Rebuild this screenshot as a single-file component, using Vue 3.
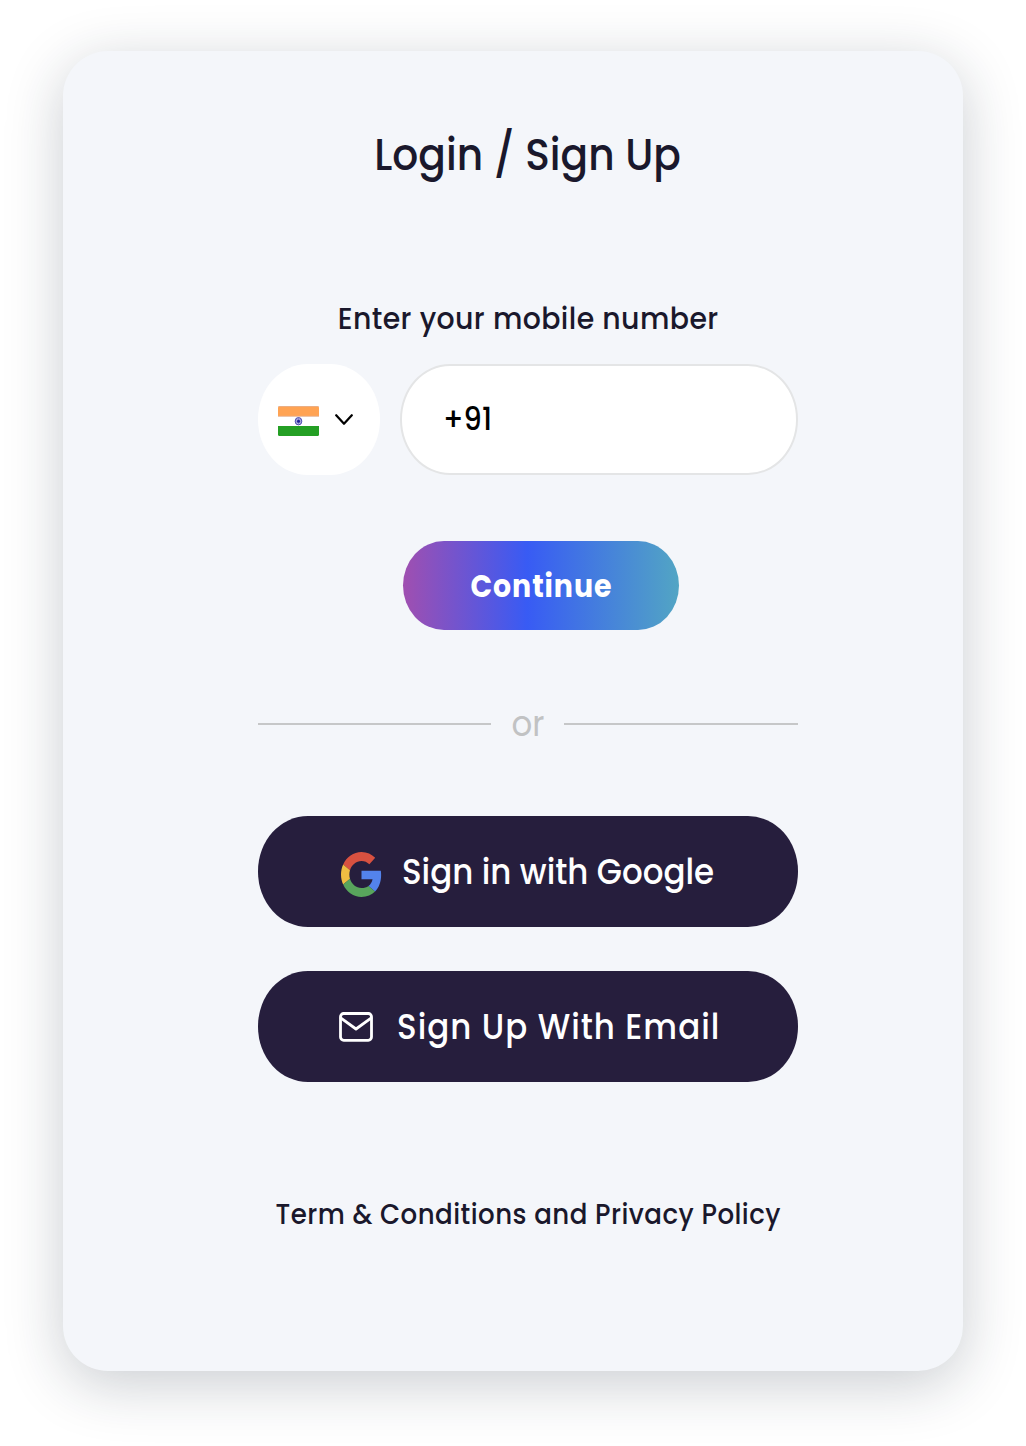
<script setup>
import { ref } from 'vue'

const phone = ref('+91')
</script>

<template>
  <main class="page">
    <section class="card">
      <h1 class="title"><span>Login / Sign Up</span></h1>

      <label class="label" for="phone"><span>Enter your mobile number</span></label>
      <div class="phone-row">
        <button class="country" type="button" aria-label="Country">
          <svg class="flag" viewBox="0 0 41 30">
            <rect width="41" height="30" rx="1.5" fill="#fff" />
            <path d="M1.5 0h38Q41 0 41 1.5V10.5H0V1.5Q0 0 1.5 0Z" fill="#ffa353" />
            <path d="M0 20h41v8.500q0 1.500-1.500 1.500h-38Q0 30 0 28.500Z" fill="#249f24" />
            <path d="M0 .4h41M0 10.300h41" stroke="#d8b7ad" stroke-width=".6" />
            <ellipse cx="20.500" cy="15.200" rx="3.300" ry="3.700" fill="#b9b9e6" stroke="#4b4baf" stroke-width="1" />
            <path d="M20.500 12v6.400M17.600 15.200h5.800M18.400 12.900l4.200 4.600M22.600 12.900l-4.200 4.600" stroke="#5555b5" stroke-width=".5" />
            <circle cx="20.500" cy="15.200" r="1.500" fill="#20209a" />
          </svg>
          <svg class="chevron" viewBox="0 0 18 12">
            <path d="M1.200 1.200 9 9.800 16.800 1.200" fill="none" stroke="#000" stroke-width="2.200" stroke-linecap="round" stroke-linejoin="round" />
          </svg>
        </button>
        <div class="field"><span id="phone">{{ phone }}</span></div>
      </div>

      <button class="continue" type="button"><span>Continue</span></button>

      <div class="divider"><i></i><span>or</span><i></i></div>

      <button class="signin google" type="button">
        <svg class="g-logo" viewBox="0 0 48 48" preserveAspectRatio="none">
          <path fill="#d85140" d="M24 9.500c3.540 0 6.710 1.220 9.210 3.600l6.850-6.850C35.900 2.380 30.470 0 24 0 14.620 0 6.510 5.380 2.560 13.220l7.980 6.190C12.430 13.720 17.740 9.500 24 9.500z" />
          <path fill="#5383ec" d="M46.980 24.550c0-1.570-.15-3.090-.38-4.550H24v9.020h12.940c-.58 2.960-2.260 5.480-4.780 7.180l7.730 6c4.510-4.180 7.090-10.360 7.090-17.650z" />
          <path fill="#f0bd42" d="M10.530 28.590c-.48-1.450-.76-2.990-.76-4.590s.27-3.140.76-4.590l-7.980-6.190C.92 16.460 0 20.120 0 24c0 3.880.92 7.540 2.560 10.780l7.970-6.190z" />
          <path fill="#58a55c" d="M24 48c6.480 0 11.930-2.130 15.890-5.810l-7.730-6c-2.150 1.450-4.920 2.300-8.160 2.300-6.260 0-11.570-4.220-13.470-9.910l-7.980 6.190C6.510 42.620 14.620 48 24 48z" />
        </svg>
        <span>Sign in with Google</span>
      </button>

      <button class="signin email" type="button">
        <svg class="mail" viewBox="0 0 34 30">
          <g fill="none" stroke="#fff" stroke-width="2.800" stroke-linecap="round" stroke-linejoin="round">
            <rect x="1.500" y="1.500" width="31" height="26.800" rx="3.200" />
            <path d="M2 6.200 17 17 32 6.200" />
          </g>
        </svg>
        <span>Sign Up With Email</span>
      </button>

      <p class="terms"><span>Term &amp; Conditions and Privacy Policy</span></p>
    </section>
  </main>
</template>

<style>
body {
  background: #fff;
}
</style>

<style scoped>
.page {
  box-sizing: border-box;
  width: 1026px;
  height: 1446px;
  padding: 51px 63px 75px;
  overflow: hidden;
  font-family: Poppins, Inter, "Noto Sans", sans-serif;
  font-weight: 500;
  color: #1a182c;
}
.card {
  box-sizing: border-box;
  width: 900px;
  height: 1320px;
  padding: 74px 165.500px 0 195px;
  border-radius: 45px;
  background: #f4f6fa;
  box-shadow: 0 13px 58px rgba(28, 40, 58, 0.23);
  display: flex;
  flex-direction: column;
  align-items: center;
}
button {
  border: 0;
  padding: 0;
  font: inherit;
}
/* Lettering is slightly condensed throughout the card */
span {
  display: inline-block;
  white-space: nowrap;
  transform: scaleX(0.915);
}
.title {
  margin: 0;
  height: 60px;
  line-height: 60px;
  font-size: 44.5px;
  font-weight: 500;
}
.label {
  margin-top: 112px;
  height: 42px;
  line-height: 42px;
  font-size: 31px;
  letter-spacing: 0.43px;
}
.phone-row {
  margin-top: 25px;
  width: 539.5px;
  height: 111px;
  display: flex;
  gap: 20px;
}
.country {
  box-sizing: border-box;
  width: 122px;
  height: 111px;
  padding: 3px 0 0 20px;
  border-radius: 50px / 55px;
  background: #fff;
  display: flex;
  align-items: center;
  gap: 16px;
}
.flag {
  width: 41px;
  height: 30px;
}
.chevron {
  width: 18px;
  height: 12px;
  margin-top: -2px;
}
.field {
  box-sizing: border-box;
  flex: 1;
  height: 111px;
  border: 2px solid #e4e5e6;
  border-radius: 50px / 55px;
  background: #fff;
  padding-left: 41px;
  line-height: 107px;
  font-size: 31.5px;
  color: #000;
}
.field span,
.signin span {
  transform-origin: left center;
}
.continue {
  margin: 66px 0 0 27px;
  width: 276px;
  height: 89px;
  border-radius: 41px / 44.5px;
  background: linear-gradient(90deg, #a04fb0 0%, #385bf4 45%, #52a5c4 100%);
  color: #fff;
  font-size: 31px;
  font-weight: 700;
  letter-spacing: 1px;
  line-height: 91px;
}
.continue span {
  margin-left: 1px;
}
.divider {
  margin-top: 66px;
  width: 539.5px;
  height: 56px;
  display: flex;
  align-items: center;
  justify-content: space-between;
  color: #c1c2c3;
  font-size: 35.5px;
  font-weight: 400;
  line-height: 56px;
}
.divider i {
  width: 233.3px;
  height: 2px;
  background: #c6c7c8;
}
.signin {
  width: 539.5px;
  height: 111px;
  border-radius: 50px / 55px;
  background: #261e3d;
  color: #fff;
  display: flex;
  align-items: center;
  font-size: 35.5px;
}
.google {
  margin-top: 64px;
  padding-left: 82.5px;
}
.email {
  margin-top: 44px;
  padding-left: 81px;
  letter-spacing: 1.1px;
}
.g-logo {
  width: 41px;
  height: 45px;
  margin: 6px 20px 0 0;
}
.mail {
  width: 34px;
  height: 30px;
  margin-right: 23.5px;
}
.terms {
  margin: 111px 0 0;
  height: 42px;
  line-height: 42px;
  font-size: 28.5px;
  letter-spacing: 0.5px;
}
</style>
